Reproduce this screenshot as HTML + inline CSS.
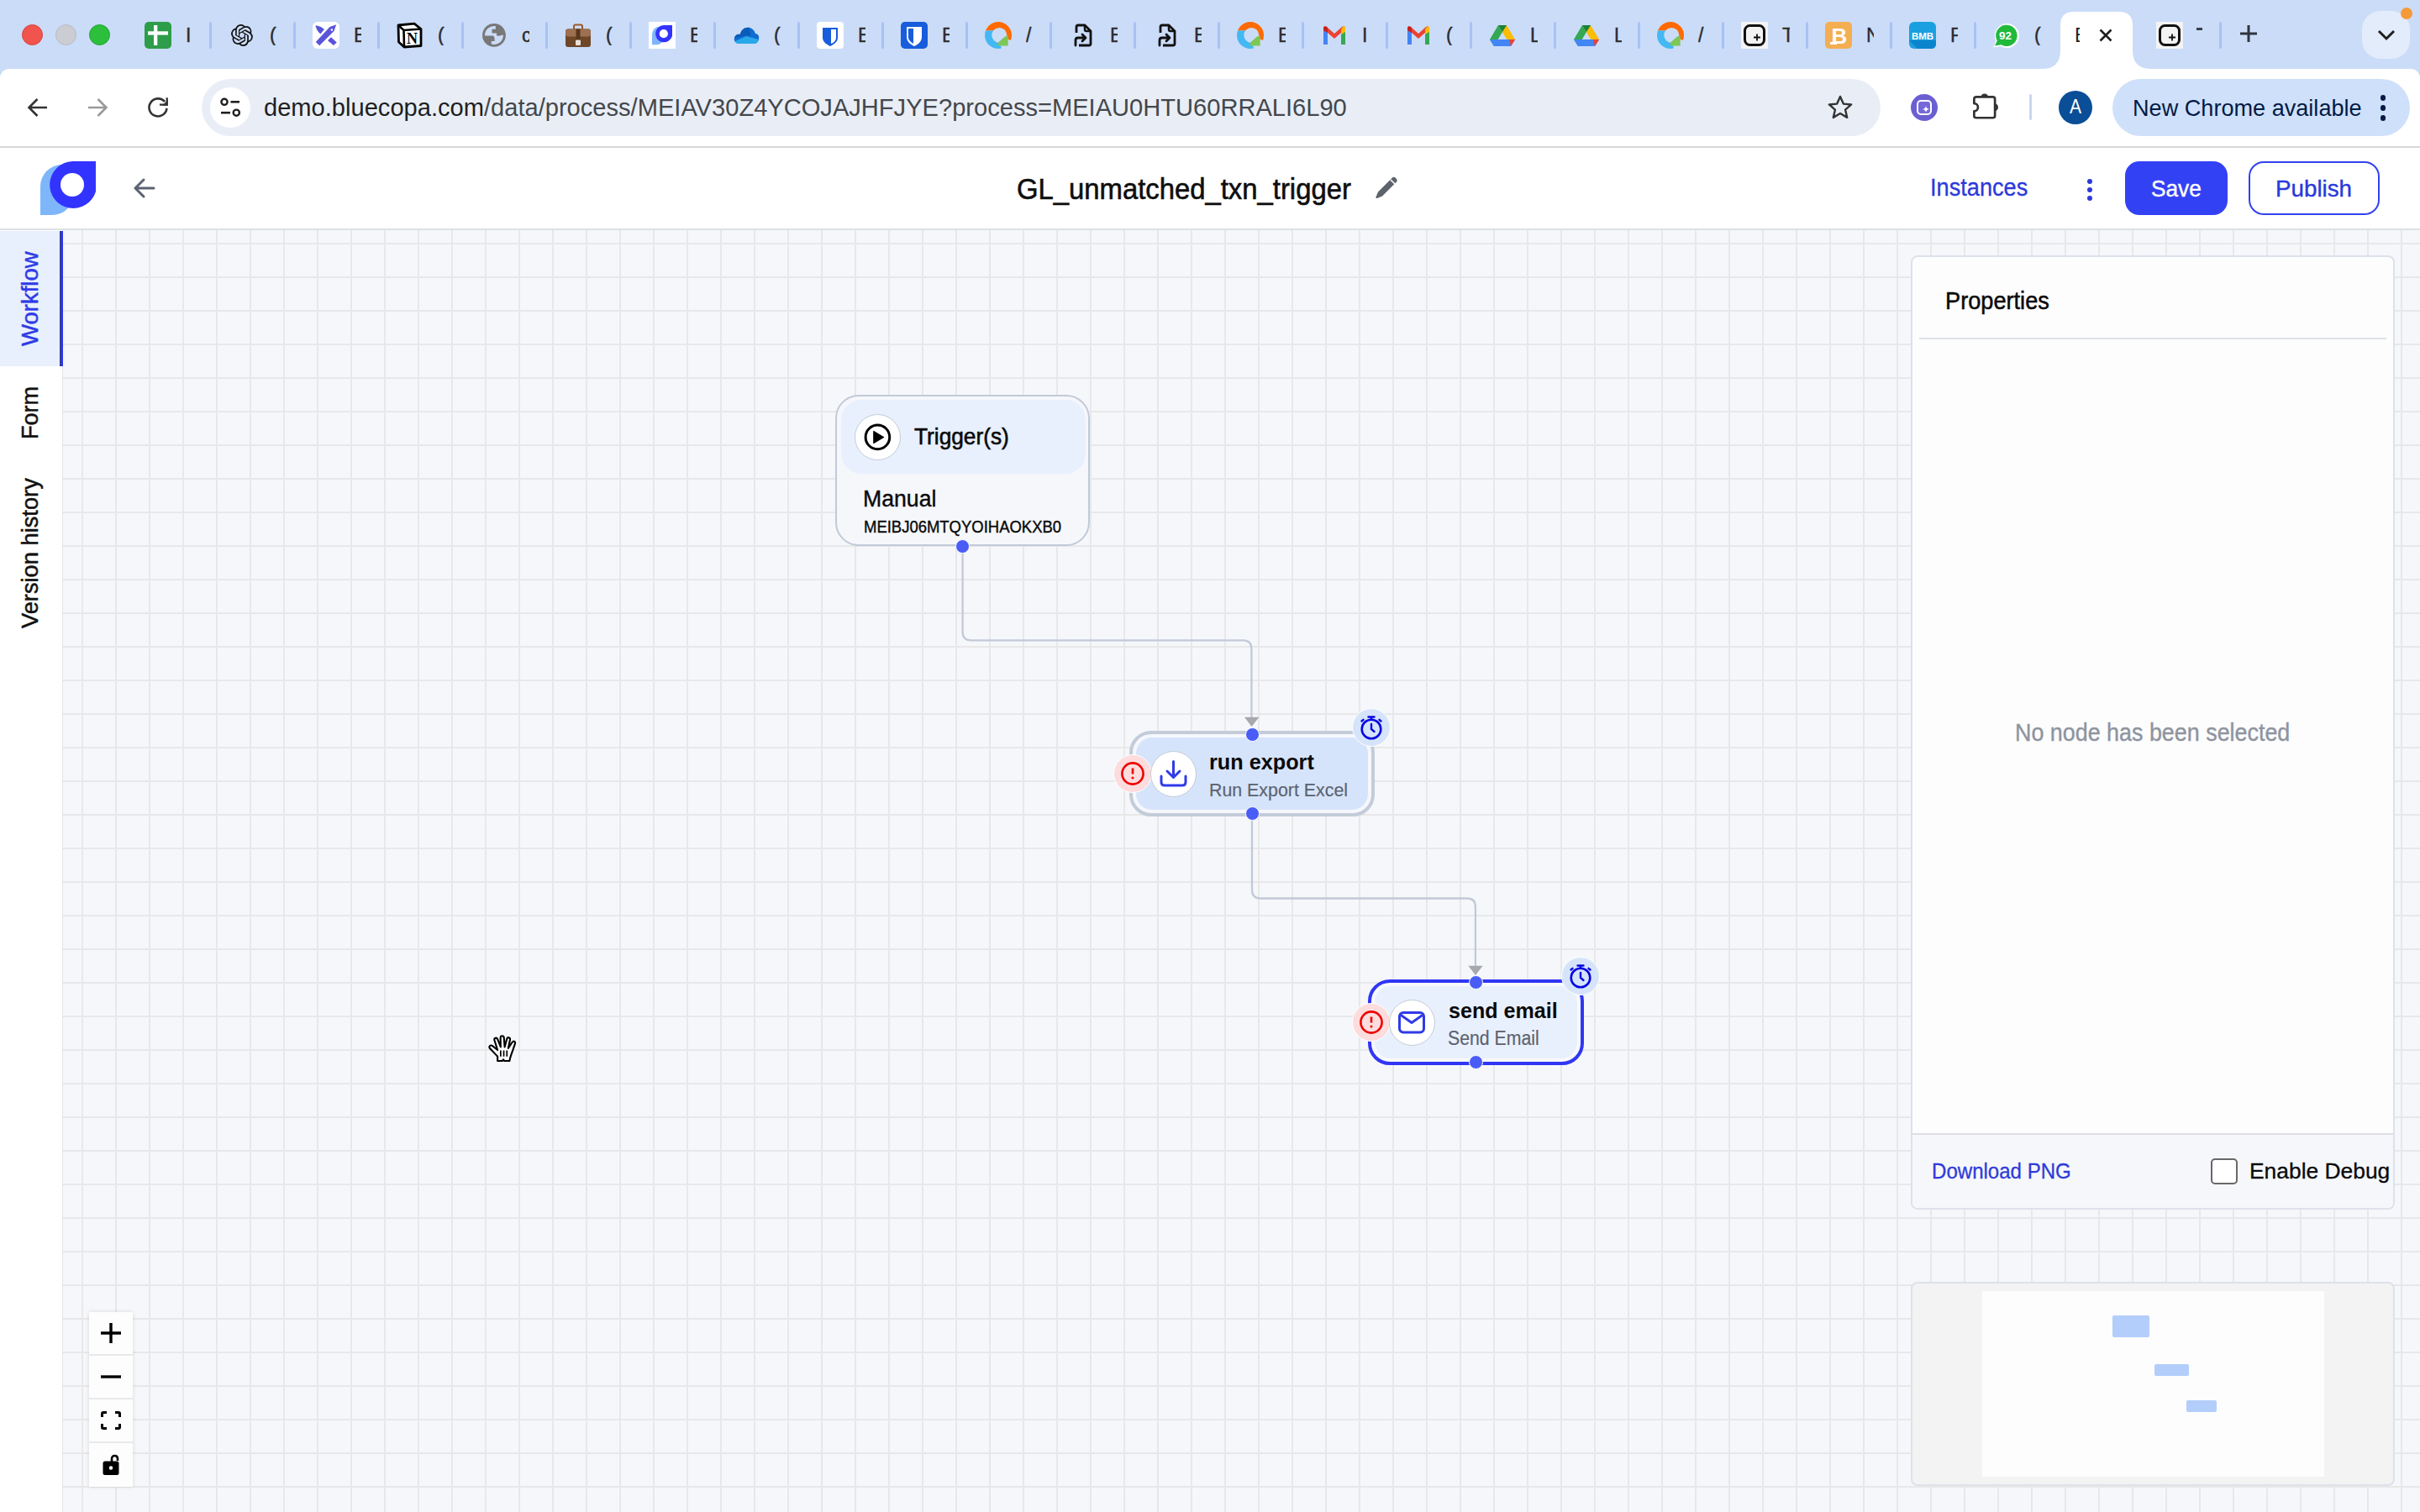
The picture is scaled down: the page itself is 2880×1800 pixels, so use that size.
<!DOCTYPE html>
<html><head><meta charset="utf-8"><title>Workflow</title>
<style>
*{box-sizing:border-box;margin:0;padding:0}
html,body{width:2880px;height:1800px;overflow:hidden;background:#F6F7FB;font-family:"Liberation Sans",sans-serif;position:relative}
.a{position:absolute}
.t{position:absolute;white-space:nowrap;transform-origin:0 50%;font-family:"Liberation Sans",sans-serif}
svg{position:absolute;overflow:visible}

</style></head><body>
<div class="a" style="left:0;top:0;width:2880px;height:100px;background:#CBDCF8"></div>
<div class="a" style="left:25.5px;top:28.5px;width:25px;height:25px;border-radius:50%;background:#F0544C;border:1px solid #D8443D"></div>
<div class="a" style="left:65.5px;top:28.5px;width:25px;height:25px;border-radius:50%;background:#CBCDD3;border:1px solid #B9BBC1"></div>
<div class="a" style="left:105.5px;top:28.5px;width:25px;height:25px;border-radius:50%;background:#2CBF3C;border:1px solid #22A530"></div>
<svg style="left:172px;top:26px" width="32" height="32" viewBox="0 0 32 32"><rect width="32" height="32" rx="5" fill="#2E9D49"/><rect x="11" y="4" width="4.3" height="24" fill="#fff"/><rect x="4" y="11.3" width="24" height="4.3" fill="#fff"/></svg>
<div class="a" style="left:221px;top:30px;width:9px;height:24px;overflow:hidden;font-size:23px;line-height:24px;color:#2C2C2C;-webkit-text-stroke:0.4px #2C2C2C;font-family:Liberation Sans">I</div>
<div class="a" style="left:248.5px;top:26px;width:3.5px;height:32px;background:#A6C2F5;border-radius:2px"></div>
<svg style="left:272px;top:26px" width="32" height="32" viewBox="0 0 32 32"><g transform="translate(3,3) scale(1.08)"><path fill="#111" d="M22.2819 9.8211a5.9847 5.9847 0 0 0-.5157-4.9108 6.0462 6.0462 0 0 0-6.5098-2.9A6.0651 6.0651 0 0 0 4.9807 4.1818a5.9847 5.9847 0 0 0-3.9977 2.9 6.0462 6.0462 0 0 0 .7427 7.0966 5.98 5.98 0 0 0 .511 4.9107 6.051 6.051 0 0 0 6.5146 2.9001A5.9847 5.9847 0 0 0 13.2599 24a6.0557 6.0557 0 0 0 5.7718-4.2058 5.9894 5.9894 0 0 0 3.9977-2.9001 6.0557 6.0557 0 0 0-.7475-7.0729zm-9.022 12.6081a4.4755 4.4755 0 0 1-2.8764-1.0408l.1419-.0804 4.7783-2.7582a.7948.7948 0 0 0 .3927-.6813v-6.7369l2.02 1.1686a.071.071 0 0 1 .038.052v5.5826a4.504 4.504 0 0 1-4.4945 4.4944zm-9.6607-4.1254a4.4708 4.4708 0 0 1-.5346-3.0137l.142.0852 4.783 2.7582a.7712.7712 0 0 0 .7806 0l5.8428-3.3685v2.3324a.0804.0804 0 0 1-.0332.0615L9.74 19.9502a4.4992 4.4992 0 0 1-6.1408-1.6464zM2.3408 7.8956a4.485 4.485 0 0 1 2.3655-1.9728V11.6a.7664.7664 0 0 0 .3879.6765l5.8144 3.3543-2.0201 1.1685a.0757.0757 0 0 1-.071 0l-4.8303-2.7865A4.504 4.504 0 0 1 2.3408 7.872zm16.5963 3.8558L13.1038 8.364 15.1192 7.2a.0757.0757 0 0 1 .071 0l4.8303 2.7913a4.4944 4.4944 0 0 1-.6765 8.1042v-5.6772a.79.79 0 0 0-.407-.667zm2.0107-3.0231l-.142-.0852-4.7735-2.7818a.7759.7759 0 0 0-.7854 0L9.409 9.2297V6.8974a.0662.0662 0 0 1 .0284-.0615l4.8303-2.7866a4.4992 4.4992 0 0 1 6.6802 4.66zM8.3065 12.863l-2.02-1.1638a.0804.0804 0 0 1-.038-.0567V6.0742a4.4992 4.4992 0 0 1 7.3757-3.4537l-.142.0805L8.704 5.459a.7948.7948 0 0 0-.3927.6813zm1.0976-2.3654l2.602-1.4998 2.6069 1.4998v2.9994l-2.5974 1.4997-2.6067-1.4997Z"/></g></svg>
<div class="a" style="left:321px;top:30px;width:9px;height:24px;overflow:hidden;font-size:23px;line-height:24px;color:#2C2C2C;-webkit-text-stroke:0.4px #2C2C2C;font-family:Liberation Sans">(</div>
<div class="a" style="left:348.5px;top:26px;width:3.5px;height:32px;background:#A6C2F5;border-radius:2px"></div>
<svg style="left:372px;top:26px" width="32" height="32" viewBox="0 0 32 32"><rect width="32" height="32" rx="6" fill="#fff"/><path d="M3.8 24 L8.2 28.2 L25.5 11 L28.2 3.2 L20.5 6 Z" fill="#5A54D8"/><path d="M3.4 4.2 Q11 5.5 13.9 9 L9.3 14.6 Q4.5 10 3.4 4.2 Z" fill="#5A54D8"/><path d="M18 22.2 L22 18.2 L28.8 24.4 L25 28 Z" fill="#5A54D8"/><circle cx="22.9" cy="9.5" r="1.3" fill="#fff"/></svg>
<div class="a" style="left:421px;top:30px;width:9px;height:24px;overflow:hidden;font-size:23px;line-height:24px;color:#2C2C2C;-webkit-text-stroke:0.4px #2C2C2C;font-family:Liberation Sans">E</div>
<div class="a" style="left:448.5px;top:26px;width:3.5px;height:32px;background:#A6C2F5;border-radius:2px"></div>
<svg style="left:472px;top:26px" width="32" height="32" viewBox="0 0 32 32"><path d="M2 4 L21 2.2 L29 8.5 L29 28.5 L9 30 L2.5 24 Z" fill="#fff" stroke="#000" stroke-width="2.8" stroke-linejoin="round"/><path d="M2.5 4.5 L8.5 10 L29 8.5 M8.5 10 L9 30" fill="none" stroke="#000" stroke-width="2.6"/><text x="18.5" y="25.5" text-anchor="middle" font-family="Liberation Serif" font-weight="700" font-size="18">N</text></svg>
<div class="a" style="left:521px;top:30px;width:9px;height:24px;overflow:hidden;font-size:23px;line-height:24px;color:#2C2C2C;-webkit-text-stroke:0.4px #2C2C2C;font-family:Liberation Sans">(</div>
<div class="a" style="left:548.5px;top:26px;width:3.5px;height:32px;background:#A6C2F5;border-radius:2px"></div>
<svg style="left:572px;top:26px" width="32" height="32" viewBox="0 0 32 32"><g transform="translate(-2,-2)"><circle cx="17.95" cy="17.9" r="13.9" fill="#787878"/><path d="M6.95 17.6 A11 11 0 0 1 19.8 7.06 V10.7 H15.5 V15.5 H20.95 V17.9 Q21.5 18.8 23.8 18.8 L28.94 17.6 A11 11 0 0 1 14.76 28.43 V25 H18.57 V21.4 Q18.2 18.6 16.7 18.6 H7 Z" fill="#CBDCF8"/></g></svg>
<div class="a" style="left:621px;top:30px;width:9px;height:24px;overflow:hidden;font-size:23px;line-height:24px;color:#2C2C2C;-webkit-text-stroke:0.4px #2C2C2C;font-family:Liberation Sans">c</div>
<div class="a" style="left:648.5px;top:26px;width:3.5px;height:32px;background:#A6C2F5;border-radius:2px"></div>
<svg style="left:672px;top:26px" width="32" height="32" viewBox="0 0 32 32"><rect x="11" y="3.5" width="10" height="6" rx="2" fill="none" stroke="#9A5A2A" stroke-width="2"/><rect x="1" y="8.5" width="30" height="21.5" rx="3" fill="#6E4729"/><rect x="1" y="8.5" width="30" height="9" rx="3" fill="#9C7050"/><rect x="13.5" y="8.5" width="5" height="16" fill="#5A361C"/><rect x="13" y="21.5" width="6" height="6.5" rx="1" fill="#E8E0D8"/></svg>
<div class="a" style="left:721px;top:30px;width:9px;height:24px;overflow:hidden;font-size:23px;line-height:24px;color:#2C2C2C;-webkit-text-stroke:0.4px #2C2C2C;font-family:Liberation Sans">(</div>
<div class="a" style="left:748.5px;top:26px;width:3.5px;height:32px;background:#A6C2F5;border-radius:2px"></div>
<svg style="left:772px;top:26px" width="32" height="32" viewBox="0 0 32 32"><rect width="32" height="32" fill="#fff"/><g transform="translate(4,4) scale(0.36363636363636365)"><path d="M0 64 V30 A26 26 0 0 1 26 4 H40 V38 A26 26 0 0 1 14 64 Z" fill="#7EB6FA"/><path d="M66 0 V36 A28 28 0 1 1 38 0 Z" fill="#3333FF"/><circle cx="38" cy="28" r="14" fill="#fff"/></g></svg>
<div class="a" style="left:821px;top:30px;width:9px;height:24px;overflow:hidden;font-size:23px;line-height:24px;color:#2C2C2C;-webkit-text-stroke:0.4px #2C2C2C;font-family:Liberation Sans">E</div>
<div class="a" style="left:848.5px;top:26px;width:3.5px;height:32px;background:#A6C2F5;border-radius:2px"></div>
<svg style="left:872px;top:26px" width="32" height="32" viewBox="0 0 32 32"><path d="M8 26 C3 26 1 22 2 19 C3 15 7 14 9 15 C10 9 15 6 20 7 C24 8 26 11 27 14 C30 14 32 17 31 21 C30 25 27 26 25 26 Z" fill="#0F6CD0"/><path d="M2 19 C3 15 7 14 9 15 C10 9 15 6 20 7 L21 16 Z" fill="#0A5CB8"/><path d="M3 23 L16 17 L31 21 C30 25 27 26 25 26 L8 26 C5 26 3 25 3 23Z" fill="#28A8EA"/></svg>
<div class="a" style="left:921px;top:30px;width:9px;height:24px;overflow:hidden;font-size:23px;line-height:24px;color:#2C2C2C;-webkit-text-stroke:0.4px #2C2C2C;font-family:Liberation Sans">(</div>
<div class="a" style="left:948.5px;top:26px;width:3.5px;height:32px;background:#A6C2F5;border-radius:2px"></div>
<svg style="left:972px;top:26px" width="32" height="32" viewBox="0 0 32 32"><rect width="32" height="32" rx="4" fill="#fff"/><path d="M7 7 H25 V19 C25 24 20 27 16 29 C12 27 7 24 7 19 Z" fill="#175DDC"/><path d="M17 9 H23 V19 C23 22 20 25 17 26 Z" fill="#fff"/></svg>
<div class="a" style="left:1021px;top:30px;width:9px;height:24px;overflow:hidden;font-size:23px;line-height:24px;color:#2C2C2C;-webkit-text-stroke:0.4px #2C2C2C;font-family:Liberation Sans">E</div>
<div class="a" style="left:1048.5px;top:26px;width:3.5px;height:32px;background:#A6C2F5;border-radius:2px"></div>
<svg style="left:1072px;top:26px" width="32" height="32" viewBox="0 0 32 32"><rect width="32" height="32" rx="5" fill="#175DDC"/><path d="M7 6 H25 V18 C25 24 20 27 16 29 C12 27 7 24 7 18 Z" fill="#fff"/><path d="M9 8 H15 V26 C12 24 9 22 9 18 Z" fill="#175DDC"/><path d="M17 8 H23 V18 C23 22 20 25 17 26 Z" fill="#fff"/></svg>
<div class="a" style="left:1121px;top:30px;width:9px;height:24px;overflow:hidden;font-size:23px;line-height:24px;color:#2C2C2C;-webkit-text-stroke:0.4px #2C2C2C;font-family:Liberation Sans">E</div>
<div class="a" style="left:1148.5px;top:26px;width:3.5px;height:32px;background:#A6C2F5;border-radius:2px"></div>
<svg style="left:1172px;top:26px" width="32" height="32" viewBox="0 0 32 32"><defs><clipPath id="co10"><path d="M-14 10.4 L16 10.4 L16 16 L43.8 27.2 L46 -14 L-14 -14 Z"/></clipPath><clipPath id="cb10"><path d="M-14 10.4 L16 10.4 L16 16 L23.26 45.1 L-14 46 Z"/></clipPath></defs><path d="M0 16 A16 16 0 1 0 32 16 A16 16 0 1 0 0 16 Z M8.3 15.9 A9 9 0 1 0 26.3 15.9 A9 9 0 1 0 8.3 15.9 Z" fill-rule="evenodd" fill="#FF6A00" clip-path="url(#co10)"/><path d="M0 16 A16 16 0 1 0 32 16 A16 16 0 1 0 0 16 Z M8.3 15.9 A9 9 0 1 0 26.3 15.9 A9 9 0 1 0 8.3 15.9 Z" fill-rule="evenodd" fill="#44B8F3" clip-path="url(#cb10)"/><path d="M16.1 24.6 L24 17.5 L27.7 16.6 L27.7 28.5 L16.1 28.5 Z" fill="#7DC757"/></svg>
<div class="a" style="left:1221px;top:30px;width:9px;height:24px;overflow:hidden;font-size:23px;line-height:24px;color:#2C2C2C;-webkit-text-stroke:0.4px #2C2C2C;font-family:Liberation Sans">/</div>
<div class="a" style="left:1248.5px;top:26px;width:3.5px;height:32px;background:#A6C2F5;border-radius:2px"></div>
<svg style="left:1272px;top:26px" width="32" height="32" viewBox="0 0 32 32"><path d="M9 13 V6 Q9 4 11 4 H19 L26 11 V26 Q26 28 24 28 H12" fill="none" stroke="#111" stroke-width="2.8" stroke-linejoin="round"/><path d="M19 4 V9 Q19 11 21 11 H26" fill="none" stroke="#111" stroke-width="2.5"/><path d="M8 28 V22 Q8 19 11 19 H20 M16 15 L20 19 L16 23" fill="none" stroke="#111" stroke-width="2.8" stroke-linecap="round" stroke-linejoin="round"/></svg>
<div class="a" style="left:1321px;top:30px;width:9px;height:24px;overflow:hidden;font-size:23px;line-height:24px;color:#2C2C2C;-webkit-text-stroke:0.4px #2C2C2C;font-family:Liberation Sans">E</div>
<div class="a" style="left:1348.5px;top:26px;width:3.5px;height:32px;background:#A6C2F5;border-radius:2px"></div>
<svg style="left:1372px;top:26px" width="32" height="32" viewBox="0 0 32 32"><path d="M9 13 V6 Q9 4 11 4 H19 L26 11 V26 Q26 28 24 28 H12" fill="none" stroke="#111" stroke-width="2.8" stroke-linejoin="round"/><path d="M19 4 V9 Q19 11 21 11 H26" fill="none" stroke="#111" stroke-width="2.5"/><path d="M8 28 V22 Q8 19 11 19 H20 M16 15 L20 19 L16 23" fill="none" stroke="#111" stroke-width="2.8" stroke-linecap="round" stroke-linejoin="round"/></svg>
<div class="a" style="left:1421px;top:30px;width:9px;height:24px;overflow:hidden;font-size:23px;line-height:24px;color:#2C2C2C;-webkit-text-stroke:0.4px #2C2C2C;font-family:Liberation Sans">E</div>
<div class="a" style="left:1448.5px;top:26px;width:3.5px;height:32px;background:#A6C2F5;border-radius:2px"></div>
<svg style="left:1472px;top:26px" width="32" height="32" viewBox="0 0 32 32"><defs><clipPath id="co13"><path d="M-14 10.4 L16 10.4 L16 16 L43.8 27.2 L46 -14 L-14 -14 Z"/></clipPath><clipPath id="cb13"><path d="M-14 10.4 L16 10.4 L16 16 L23.26 45.1 L-14 46 Z"/></clipPath></defs><path d="M0 16 A16 16 0 1 0 32 16 A16 16 0 1 0 0 16 Z M8.3 15.9 A9 9 0 1 0 26.3 15.9 A9 9 0 1 0 8.3 15.9 Z" fill-rule="evenodd" fill="#FF6A00" clip-path="url(#co13)"/><path d="M0 16 A16 16 0 1 0 32 16 A16 16 0 1 0 0 16 Z M8.3 15.9 A9 9 0 1 0 26.3 15.9 A9 9 0 1 0 8.3 15.9 Z" fill-rule="evenodd" fill="#44B8F3" clip-path="url(#cb13)"/><path d="M16.1 24.6 L24 17.5 L27.7 16.6 L27.7 28.5 L16.1 28.5 Z" fill="#7DC757"/></svg>
<div class="a" style="left:1521px;top:30px;width:9px;height:24px;overflow:hidden;font-size:23px;line-height:24px;color:#2C2C2C;-webkit-text-stroke:0.4px #2C2C2C;font-family:Liberation Sans">E</div>
<div class="a" style="left:1548.5px;top:26px;width:3.5px;height:32px;background:#A6C2F5;border-radius:2px"></div>
<svg style="left:1572px;top:26px" width="32" height="32" viewBox="0 0 32 32"><path d="M3 27 V8 Q3 4 7 6 L16 14 L25 6 Q29 4 29 8 V27 H24 V13 L16 20 L8 13 V27 Z" fill="#EA4335"/><rect x="3" y="11" width="5" height="16" rx="1.5" fill="#4285F4"/><rect x="24" y="11" width="5" height="16" rx="1.5" fill="#34A853"/><path d="M24 9 L27 5 Q29 5 29 8 V12 L24 15 Z" fill="#FBBC04"/><path d="M3 8 Q3 4 7 6 L8 7 V13 L3 10 Z" fill="#C5221F"/></svg>
<div class="a" style="left:1621px;top:30px;width:9px;height:24px;overflow:hidden;font-size:23px;line-height:24px;color:#2C2C2C;-webkit-text-stroke:0.4px #2C2C2C;font-family:Liberation Sans">I</div>
<div class="a" style="left:1648.5px;top:26px;width:3.5px;height:32px;background:#A6C2F5;border-radius:2px"></div>
<svg style="left:1672px;top:26px" width="32" height="32" viewBox="0 0 32 32"><path d="M3 27 V8 Q3 4 7 6 L16 14 L25 6 Q29 4 29 8 V27 H24 V13 L16 20 L8 13 V27 Z" fill="#EA4335"/><rect x="3" y="11" width="5" height="16" rx="1.5" fill="#4285F4"/><rect x="24" y="11" width="5" height="16" rx="1.5" fill="#34A853"/><path d="M24 9 L27 5 Q29 5 29 8 V12 L24 15 Z" fill="#FBBC04"/><path d="M3 8 Q3 4 7 6 L8 7 V13 L3 10 Z" fill="#C5221F"/></svg>
<div class="a" style="left:1721px;top:30px;width:9px;height:24px;overflow:hidden;font-size:23px;line-height:24px;color:#2C2C2C;-webkit-text-stroke:0.4px #2C2C2C;font-family:Liberation Sans">(</div>
<div class="a" style="left:1748.5px;top:26px;width:3.5px;height:32px;background:#A6C2F5;border-radius:2px"></div>
<svg style="left:1772px;top:26px" width="32" height="32" viewBox="0 0 32 32"><path d="M11 4 H21 L31 21 L26 29 Z" fill="#FBBC04"/><path d="M11 4 L1 21 L6 29 L16 12 Z" fill="#34A853"/><path d="M6 29 L1 21 H31 L26 29 Z" fill="#4285F4"/><path d="M26 29 L31 21 H24 Z" fill="#EA4335"/><path d="M11 4 L16 12 L21 4 Z" fill="#188038"/></svg>
<div class="a" style="left:1821px;top:30px;width:9px;height:24px;overflow:hidden;font-size:23px;line-height:24px;color:#2C2C2C;-webkit-text-stroke:0.4px #2C2C2C;font-family:Liberation Sans">L</div>
<div class="a" style="left:1848.5px;top:26px;width:3.5px;height:32px;background:#A6C2F5;border-radius:2px"></div>
<svg style="left:1872px;top:26px" width="32" height="32" viewBox="0 0 32 32"><path d="M11 4 H21 L31 21 L26 29 Z" fill="#FBBC04"/><path d="M11 4 L1 21 L6 29 L16 12 Z" fill="#34A853"/><path d="M6 29 L1 21 H31 L26 29 Z" fill="#4285F4"/><path d="M26 29 L31 21 H24 Z" fill="#EA4335"/><path d="M11 4 L16 12 L21 4 Z" fill="#188038"/></svg>
<div class="a" style="left:1921px;top:30px;width:9px;height:24px;overflow:hidden;font-size:23px;line-height:24px;color:#2C2C2C;-webkit-text-stroke:0.4px #2C2C2C;font-family:Liberation Sans">L</div>
<div class="a" style="left:1948.5px;top:26px;width:3.5px;height:32px;background:#A6C2F5;border-radius:2px"></div>
<svg style="left:1972px;top:26px" width="32" height="32" viewBox="0 0 32 32"><defs><clipPath id="co18"><path d="M-14 10.4 L16 10.4 L16 16 L43.8 27.2 L46 -14 L-14 -14 Z"/></clipPath><clipPath id="cb18"><path d="M-14 10.4 L16 10.4 L16 16 L23.26 45.1 L-14 46 Z"/></clipPath></defs><path d="M0 16 A16 16 0 1 0 32 16 A16 16 0 1 0 0 16 Z M8.3 15.9 A9 9 0 1 0 26.3 15.9 A9 9 0 1 0 8.3 15.9 Z" fill-rule="evenodd" fill="#FF6A00" clip-path="url(#co18)"/><path d="M0 16 A16 16 0 1 0 32 16 A16 16 0 1 0 0 16 Z M8.3 15.9 A9 9 0 1 0 26.3 15.9 A9 9 0 1 0 8.3 15.9 Z" fill-rule="evenodd" fill="#44B8F3" clip-path="url(#cb18)"/><path d="M16.1 24.6 L24 17.5 L27.7 16.6 L27.7 28.5 L16.1 28.5 Z" fill="#7DC757"/></svg>
<div class="a" style="left:2021px;top:30px;width:9px;height:24px;overflow:hidden;font-size:23px;line-height:24px;color:#2C2C2C;-webkit-text-stroke:0.4px #2C2C2C;font-family:Liberation Sans">/</div>
<div class="a" style="left:2048.5px;top:26px;width:3.5px;height:32px;background:#A6C2F5;border-radius:2px"></div>
<svg style="left:2072px;top:26px" width="32" height="32" viewBox="0 0 32 32"><rect width="32" height="32" fill="#F3F3F3"/><rect x="4.5" y="4.5" width="23" height="23" rx="6" fill="none" stroke="#111" stroke-width="3"/><path d="M19 14.5 V22.5 M15 18.5 H23" stroke="#111" stroke-width="1.8"/></svg>
<div class="a" style="left:2121px;top:30px;width:9px;height:24px;overflow:hidden;font-size:23px;line-height:24px;color:#2C2C2C;-webkit-text-stroke:0.4px #2C2C2C;font-family:Liberation Sans">T</div>
<div class="a" style="left:2148.5px;top:26px;width:3.5px;height:32px;background:#A6C2F5;border-radius:2px"></div>
<svg style="left:2172px;top:26px" width="32" height="32" viewBox="0 0 32 32"><rect width="32" height="32" rx="5" fill="#F4AE52"/><text x="17" y="26" text-anchor="middle" font-family="Liberation Sans" font-weight="700" font-size="26" fill="#fff">B</text><rect x="6" y="24" width="8" height="3" fill="#fff"/></svg>
<div class="a" style="left:2221px;top:30px;width:9px;height:24px;overflow:hidden;font-size:23px;line-height:24px;color:#2C2C2C;-webkit-text-stroke:0.4px #2C2C2C;font-family:Liberation Sans">N</div>
<div class="a" style="left:2248.5px;top:26px;width:3.5px;height:32px;background:#A6C2F5;border-radius:2px"></div>
<svg style="left:2272px;top:26px" width="32" height="32" viewBox="0 0 32 32"><rect width="32" height="32" rx="6" fill="#1AA0E0"/><path d="M0 22 L10 32 H26 Q32 32 32 26 V22 Z" fill="#0A84CC"/><text x="16" y="21" text-anchor="middle" font-family="Liberation Sans" font-weight="700" font-size="11.5" fill="#fff">BMB</text></svg>
<div class="a" style="left:2321px;top:30px;width:9px;height:24px;overflow:hidden;font-size:23px;line-height:24px;color:#2C2C2C;-webkit-text-stroke:0.4px #2C2C2C;font-family:Liberation Sans">F</div>
<div class="a" style="left:2348.5px;top:26px;width:3.5px;height:32px;background:#A6C2F5;border-radius:2px"></div>
<svg style="left:2372px;top:26px" width="32" height="32" viewBox="0 0 32 32"><g transform="translate(-3,0)"><path d="M3 30.5 L6.5 23 A14.5 14.5 0 1 1 12 29 Z" fill="#fff"/><path d="M5 28.5 L7.8 22.5 A12.7 12.7 0 1 1 12.5 27.3 Z" fill="#20B93A"/><text x="17.5" y="21" text-anchor="middle" font-family="Liberation Sans" font-weight="700" font-size="13.5" fill="#fff">92</text></g></svg>
<div class="a" style="left:2421px;top:30px;width:9px;height:24px;overflow:hidden;font-size:23px;line-height:24px;color:#2C2C2C;-webkit-text-stroke:0.4px #2C2C2C;font-family:Liberation Sans">(</div>
<svg style="left:2420px;top:0" width="150" height="84" viewBox="0 0 150 84"><path d="M10 82 Q32 82 32 60 V30 Q32 14 48 14 H102 Q118 14 118 30 V60 Q118 82 140 82 Z" fill="#fff"/></svg>
<div class="a" style="left:2469px;top:30px;width:6px;height:24px;overflow:hidden;font-size:23px;line-height:24px;color:#1F1F1F">E</div>
<svg style="left:2498px;top:34px" width="16" height="16" viewBox="0 0 16 16"><path d="M1.5 1.5 L14.5 14.5 M14.5 1.5 L1.5 14.5" stroke="#1F1F1F" stroke-width="2.6"/></svg>
<svg style="left:2566px;top:26px" width="32" height="32" viewBox="0 0 32 32"><rect width="32" height="32" fill="#F3F3F3"/><rect x="4.5" y="4.5" width="23" height="23" rx="6" fill="none" stroke="#111" stroke-width="3"/><path d="M19 14.5 V22.5 M15 18.5 H23" stroke="#111" stroke-width="1.8"/></svg>
<div class="a" style="left:2614px;top:33px;width:7px;height:3px;background:#3A3F48"></div>
<div class="a" style="left:2640.5px;top:26px;width:3.5px;height:32px;background:#A6C2F5;border-radius:2px"></div>
<svg style="left:2666px;top:30px" width="20" height="20" viewBox="0 0 20 20"><path d="M10 0 V20 M0 10 H20" stroke="#2F343C" stroke-width="3"/></svg>
<div class="a" style="left:2811px;top:13px;width:57px;height:57px;border-radius:22px;background:#E3ECFB"></div>
<svg style="left:2829px;top:35px" width="22" height="14" viewBox="0 0 22 14"><path d="M2 2 L11 11 L20 2" fill="none" stroke="#1F1F1F" stroke-width="3"/></svg>
<div class="a" style="left:2857px;top:8.5px;width:14px;height:14px;border-radius:50%;background:#F59A3A"></div>
<div class="a" style="left:0;top:82px;width:2880px;height:94px;background:#FFFFFF;border-top-left-radius:11px;border-top-right-radius:11px"></div>
<div class="a" style="left:0;top:174px;width:2880px;height:2px;background:#D6D8D6"></div>
<svg style="left:32px;top:116px" width="25" height="24" viewBox="0 0 25 24"><path d="M24 12 H3 M12.5 2 L2.5 12 L12.5 22" fill="none" stroke="#333" stroke-width="2.6"/></svg>
<svg style="left:103.5px;top:116px" width="25" height="24" viewBox="0 0 25 24"><path d="M1 12 H22 M12.5 2 L22.5 12 L12.5 22" fill="none" stroke="#9A9A9A" stroke-width="2.6"/></svg>
<svg style="left:175px;top:115px" width="26" height="26" viewBox="0 0 26 26"><path d="M21.04 6.15 A10.5 10.5 0 1 0 23.46 13.82" fill="none" stroke="#333" stroke-width="2.6"/><path d="M15 9.6 H23.7 V1.2" fill="none" stroke="#333" stroke-width="2.3"/><path d="M18 10.7 H24.8 V4 Z" fill="#333"/></svg>
<div class="a" style="left:240px;top:94px;width:1998px;height:68px;border-radius:34px;background:#E9EEF6"></div>
<div class="a" style="left:250px;top:104px;width:48px;height:48px;border-radius:50%;background:#FFFFFF"></div>
<svg style="left:260px;top:114px" width="28" height="28" viewBox="0 0 28 28"><circle cx="7" cy="7.3" r="3.6" fill="none" stroke="#1F1F1F" stroke-width="2.4"/><path d="M14.5 7.3 H25" stroke="#1F1F1F" stroke-width="2.6"/><path d="M3 20.2 H14" stroke="#1F1F1F" stroke-width="2.6"/><circle cx="21.3" cy="20.2" r="3.6" fill="none" stroke="#1F1F1F" stroke-width="2.4"/></svg>
<div class="t" style="left:314.24px;top:112.80px;font-size:30px;line-height:30px;color:#1F1F1F;font-weight:400;transform:scaleX(0.9696);-webkit-text-stroke:0px #1F1F1F;">demo.bluecopa.com<span style="color:#44474C">/data/process/MEIAV30Z4YCOJAJHFJYE?process=MEIAU0HTU60RRALI6L90</span></div>
<svg style="left:2173px;top:111px" width="34" height="34" viewBox="0 0 24 24"><path d="M12 2.8 L14.7 8.9 L21.3 9.5 L16.3 13.9 L17.8 20.4 L12 17 L6.2 20.4 L7.7 13.9 L2.7 9.5 L9.3 8.9 Z" fill="none" stroke="#333" stroke-width="1.7" stroke-linejoin="round"/></svg>
<div class="a" style="left:2274px;top:112px;width:32px;height:32px;border-radius:50%;background:#6A5FD2"></div>
<div class="a" style="left:2281px;top:119px;width:18.2px;height:18px;border-radius:5px;border:2.2px solid #fff;background:#7468DA"></div>
<svg style="left:2288px;top:126px" width="8" height="8" viewBox="0 0 8 8"><path d="M4 0 Q4.5 3.5 8 4 Q4.5 4.5 4 8 Q3.5 4.5 0 4 Q3.5 3.5 4 0Z" fill="#fff"/></svg>
<svg style="left:2344px;top:108px" width="40" height="40" viewBox="0 0 40 40"><path d="M5.35 10 Q5.35 7.35 8 7.35 H27.5 Q30.15 7.35 30.15 10 V30 Q30.15 32.25 27.5 32.25 H8 Q5.35 32.25 5.35 30 V24.4 A4.5 4.5 0 0 0 5.35 15.2 Z" fill="none" stroke="#333" stroke-width="2.7" stroke-linejoin="round"/><path d="M13.3 8 A4.5 4.5 0 0 1 22.3 8 Z" fill="#333"/><path d="M29.5 15.2 A4.5 4.5 0 0 1 29.5 24.2 Z" fill="#333"/></svg>
<div class="a" style="left:2414.5px;top:112px;width:3px;height:31px;background:#C9D7F0;border-radius:2px"></div>
<div class="a" style="left:2450px;top:108px;width:40px;height:40px;border-radius:50%;background:#0A4E98"></div>
<div class="t" style="left:2463.00px;top:115.95px;font-size:23.7px;line-height:23.7px;color:#FFFFFF;font-weight:400;transform:scaleX(0.8883);-webkit-text-stroke:0px #FFFFFF;">A</div>
<div class="a" style="left:2514px;top:94px;width:354px;height:68px;border-radius:34px;background:#CFE0FB"></div>
<div class="t" style="left:2537.53px;top:114.64px;font-size:27.6px;line-height:27.6px;color:#041B45;font-weight:400;transform:scaleX(0.9821);-webkit-text-stroke:0px #041B45;">New Chrome available</div>
<div class="a" style="left:2832.8px;top:113.3px;width:6.4px;height:6.4px;border-radius:50%;background:#041B45"></div>
<div class="a" style="left:2832.8px;top:125.3px;width:6.4px;height:6.4px;border-radius:50%;background:#041B45"></div>
<div class="a" style="left:2832.8px;top:137.3px;width:6.4px;height:6.4px;border-radius:50%;background:#041B45"></div>
<div class="a" style="left:0;top:176px;width:2880px;height:96px;background:#FFFFFF"></div>
<div class="a" style="left:0;top:272px;width:2880px;height:2px;background:#DDE0E5"></div>
<svg style="left:48px;top:192px" width="66" height="64" viewBox="0 0 66 64"><g transform="translate(0,0) scale(1.0)"><path d="M0 64 V30 A26 26 0 0 1 26 4 H40 V38 A26 26 0 0 1 14 64 Z" fill="#7EB6FA"/><path d="M66 0 V36 A28 28 0 1 1 38 0 Z" fill="#3333FF"/><circle cx="38" cy="28" r="14" fill="#fff"/></g></svg>
<svg style="left:158px;top:211px" width="28" height="26" viewBox="0 0 28 26"><path d="M25 13 H4 M13 3 L3 13 L13 23" fill="none" stroke="#5B6270" stroke-width="3" stroke-linecap="round" stroke-linejoin="round"/></svg>
<div class="t" style="left:1210.36px;top:207.25px;font-size:35px;line-height:35px;color:#0E0E0E;font-weight:400;transform:scaleX(0.9380);-webkit-text-stroke:0.6px #0E0E0E;">GL_unmatched_txn_trigger</div>
<svg style="left:1636px;top:209px" width="28" height="29" viewBox="0 0 28 29"><path d="M21 2.5 Q23 1 25 3 L26 4 Q27.5 6 26 7.5 L9 24.5 L3 27 Q1 27.5 1.5 25.5 L4 19.5 Z" fill="#5D636D"/><path d="M19 5 L24 10" stroke="#fff" stroke-width="1.6"/></svg>
<div class="t" style="left:2297.35px;top:209.35px;font-size:29px;line-height:29px;color:#2B39DB;font-weight:400;transform:scaleX(0.9370);-webkit-text-stroke:0.3px #2B39DB;">Instances</div>
<div class="a" style="left:2483.7px;top:212.7px;width:6.6px;height:6.6px;border-radius:50%;background:#2B39DB"></div>
<div class="a" style="left:2483.7px;top:222.7px;width:6.6px;height:6.6px;border-radius:50%;background:#2B39DB"></div>
<div class="a" style="left:2483.7px;top:232.7px;width:6.6px;height:6.6px;border-radius:50%;background:#2B39DB"></div>
<div class="a" style="left:2529px;top:192px;width:122px;height:64px;border-radius:17px;background:#3341F5"></div>
<div class="t" style="left:2559.82px;top:209.78px;font-size:28.5px;line-height:28.5px;color:#FFFFFF;font-weight:400;transform:scaleX(0.9213);-webkit-text-stroke:0.4px #FFFFFF;">Save</div>
<div class="a" style="left:2675.5px;top:192px;width:156.5px;height:64px;border-radius:18px;border:2px solid #3341F0;background:#FFFFFF"></div>
<div class="t" style="left:2707.78px;top:209.78px;font-size:28.5px;line-height:28.5px;color:#2B39DB;font-weight:400;transform:scaleX(0.9737);-webkit-text-stroke:0.4px #2B39DB;">Publish</div>
<div class="a" style="left:0;top:274px;width:2880px;height:1526px;background-color:#F6F7FB;background-image:linear-gradient(to right,#E8E8E9 2px,transparent 2px),linear-gradient(to bottom,#E8E8E9 2px,transparent 2px);background-size:40px 40px;background-position:17px 15px"></div>
<div class="a" style="left:0;top:274px;width:75px;height:1526px;background:#FFFFFF;border-right:1.5px solid #E2E4E9"></div>
<div class="a" style="left:0;top:275px;width:71px;height:161px;background:#E8EFFD"></div>
<div class="a" style="left:71px;top:275px;width:4px;height:161px;background:#2B36F0;border-left:1px solid #3B4258"></div>
<div class="t" style="left:21.62px;top:411.64px;font-size:27.5px;line-height:27.5px;color:#2E3BE6;font-weight:400;transform-origin:0 0;transform:rotate(-90deg) scaleX(1.0002);-webkit-text-stroke:0.5px #2E3BE6">Workflow</div>
<div class="t" style="left:21.62px;top:523.17px;font-size:27.5px;line-height:27.5px;color:#111111;font-weight:400;transform-origin:0 0;transform:rotate(-90deg) scaleX(0.9846);-webkit-text-stroke:0.5px #111111">Form</div>
<div class="t" style="left:21.62px;top:747.84px;font-size:27.5px;line-height:27.5px;color:#111111;font-weight:400;transform-origin:0 0;transform:rotate(-90deg) scaleX(0.9913);-webkit-text-stroke:0.5px #111111">Version history</div>
<svg style="left:0;top:0" width="2880" height="1800"><path d="M1145.6 655 V752.3 Q1145.6 762.3 1155.6 762.3 H1479.4 Q1489.4 762.3 1489.4 772.3 V856" fill="none" stroke="#C1CAD6" stroke-width="2.3"/><path d="M1481 853.8 H1498.3 L1489.6 865 Z" fill="#A6A8AE"/><path d="M1490 970 V1059.5 Q1490 1069.5 1500 1069.5 H1745.9 Q1755.9 1069.5 1755.9 1079.5 V1151" fill="none" stroke="#C1CAD6" stroke-width="2.3"/><path d="M1747.4 1149.7 H1764.6 L1756 1161 Z" fill="#A6A8AE"/></svg>
<div class="a" style="left:994px;top:470px;width:303px;height:179.5px;border-radius:28px;border:2px solid #C0CAD8;background:#F6F7FB"></div>
<div class="a" style="left:1000.5px;top:476px;width:291.5px;height:88px;border-radius:24px;background:#E8F0FD"></div>
<div class="a" style="left:1016.5px;top:492.5px;width:55px;height:55px;border-radius:50%;background:#FFFFFF;border:1.8px solid #C3CBD6"></div>
<svg style="left:1027px;top:503px" width="34" height="34" viewBox="0 0 34 34"><circle cx="17.4" cy="17.4" r="14.3" fill="none" stroke="#000" stroke-width="3"/><path d="M12.8 10.5 V24.5 L24.5 17.5 Z" fill="#000" stroke="#000" stroke-width="1.2" stroke-linejoin="round"/></svg>
<div class="t" style="left:1088.47px;top:506.20px;font-size:28px;line-height:28px;color:#0A0A0A;font-weight:400;transform:scaleX(0.9380);-webkit-text-stroke:0.6px #0A0A0A;">Trigger(s)</div>
<div class="t" style="left:1027.37px;top:580.55px;font-size:27px;line-height:27px;color:#0A0A0A;font-weight:400;transform:scaleX(0.9865);-webkit-text-stroke:0.4px #0A0A0A;">Manual</div>
<div class="t" style="left:1028.02px;top:617.00px;font-size:20px;line-height:20px;color:#0A0A0A;font-weight:400;transform:scaleX(0.9235);-webkit-text-stroke:0.4px #0A0A0A;">MEIBJ06MTQYOIHAOKXB0</div>
<div class="a" style="left:1137.1px;top:641.5px;width:17px;height:17px;border-radius:50%;background:#4A5CF6;border:1.5px solid #FFFFFF"></div>
<div class="a" style="left:1344px;top:870px;width:291.5px;height:101.5px;border-radius:26px;border:4px solid #C3CCD8;background:#F5F7FC"></div>
<div class="a" style="left:1352px;top:878px;width:276px;height:86px;border-radius:19px;background:#D6E4FB"></div>
<div class="a" style="left:1325px;top:898px;width:46px;height:46px;border-radius:50%;background:#FDDCDD;border:1.8px solid #FFFFFF"></div><svg style="left:1332px;top:905px" width="32" height="32" viewBox="0 0 32 32"><circle cx="16" cy="16" r="12.6" fill="none" stroke="#EE0000" stroke-width="2.6"/><path d="M16 9.5 V16.5" stroke="#EE0000" stroke-width="2.6"/><circle cx="16" cy="21" r="1.5" fill="#EE0000"/></svg>
<div class="a" style="left:1369.0px;top:893.5px;width:55px;height:55px;border-radius:50%;background:#FFFFFF;border:1.8px solid #C3CBD6"></div>
<svg style="left:1380px;top:904px" width="33" height="34" viewBox="0 0 33 34"><path d="M16.5 2.5 V21 M9 14 L16.5 21.5 L24 14" fill="none" stroke="#2F3BE8" stroke-width="3" stroke-linecap="round" stroke-linejoin="round"/><path d="M2 20 V27 Q2 31 6 31 H27 Q31 31 31 27 V20" fill="none" stroke="#2F3BE8" stroke-width="3" stroke-linecap="round"/></svg>
<div class="t" style="left:1439.36px;top:894.20px;font-size:26px;line-height:26px;color:#0A0A0A;font-weight:700;transform:scaleX(0.9708);-webkit-text-stroke:0px #0A0A0A;">run export</div>
<div class="t" style="left:1439.29px;top:929.88px;font-size:22.5px;line-height:22.5px;color:#5C6370;font-weight:400;transform:scaleX(0.9493);-webkit-text-stroke:0.2px #5C6370;">Run Export Excel</div>
<div class="a" style="left:1481.5px;top:865.5px;width:17px;height:17px;border-radius:50%;background:#4A5CF6;border:1.5px solid #FFFFFF"></div>
<div class="a" style="left:1481.5px;top:959.5px;width:17px;height:17px;border-radius:50%;background:#4A5CF6;border:1.5px solid #FFFFFF"></div>
<div class="a" style="left:1609px;top:842.5px;width:46px;height:46px;border-radius:50%;background:#D6E4FB;border:1.8px solid #FFFFFF"></div><svg style="left:1616px;top:849.5px" width="32" height="32" viewBox="0 0 32 32"><circle cx="16" cy="18" r="11.3" fill="none" stroke="#0808E0" stroke-width="2.6"/><path d="M12.5 3.5 H19.5 M16 4 V6.5 M4.5 8.5 L6.5 6.8 M27.5 8.5 L25.5 6.8 M16 12 V18 L19.5 21" fill="none" stroke="#0808E0" stroke-width="2.4" stroke-linecap="round"/></svg>
<div class="a" style="left:1628.4px;top:1166px;width:256.5px;height:101.5px;border-radius:26px;border:4px solid #3036F5;background:#F7F9FC"></div>
<div class="a" style="left:1636px;top:1174px;width:241px;height:86px;border-radius:19px;background:#E9F0FD"></div>
<div class="a" style="left:1609px;top:1194px;width:46px;height:46px;border-radius:50%;background:#FDDCDD;border:1.8px solid #FFFFFF"></div><svg style="left:1616px;top:1201px" width="32" height="32" viewBox="0 0 32 32"><circle cx="16" cy="16" r="12.6" fill="none" stroke="#EE0000" stroke-width="2.6"/><path d="M16 9.5 V16.5" stroke="#EE0000" stroke-width="2.6"/><circle cx="16" cy="21" r="1.5" fill="#EE0000"/></svg>
<div class="a" style="left:1652.8px;top:1189.5px;width:55px;height:55px;border-radius:50%;background:#FFFFFF;border:1.8px solid #C3CBD6"></div>
<svg style="left:1662px;top:1202px" width="36" height="30" viewBox="0 0 36 30"><rect x="3.5" y="3.5" width="29" height="23.5" rx="4.5" fill="none" stroke="#2F3BE8" stroke-width="3"/><path d="M4.5 6 L18 15.5 L31.5 6" fill="none" stroke="#2F3BE8" stroke-width="3" stroke-linejoin="round"/></svg>
<div class="t" style="left:1723.52px;top:1189.50px;font-size:26px;line-height:26px;color:#0A0A0A;font-weight:700;transform:scaleX(0.9644);-webkit-text-stroke:0px #0A0A0A;">send email</div>
<div class="t" style="left:1723.44px;top:1225.45px;font-size:23px;line-height:23px;color:#5C6370;font-weight:400;transform:scaleX(0.9252);-webkit-text-stroke:0.2px #5C6370;">Send Email</div>
<div class="a" style="left:1747.5px;top:1161.0px;width:17px;height:17px;border-radius:50%;background:#4A5CF6;border:1.5px solid #FFFFFF"></div>
<div class="a" style="left:1747.5px;top:1255.5px;width:17px;height:17px;border-radius:50%;background:#4A5CF6;border:1.5px solid #FFFFFF"></div>
<div class="a" style="left:1858px;top:1138.6px;width:46px;height:46px;border-radius:50%;background:#D6E4FB;border:1.8px solid #FFFFFF"></div><svg style="left:1865px;top:1145.6px" width="32" height="32" viewBox="0 0 32 32"><circle cx="16" cy="18" r="11.3" fill="none" stroke="#0808E0" stroke-width="2.6"/><path d="M12.5 3.5 H19.5 M16 4 V6.5 M4.5 8.5 L6.5 6.8 M27.5 8.5 L25.5 6.8 M16 12 V18 L19.5 21" fill="none" stroke="#0808E0" stroke-width="2.4" stroke-linecap="round"/></svg>
<div class="a" style="left:2274px;top:304px;width:576px;height:1136px;border-radius:8px;border:2px solid #DDE1EA;background:#FDFDFE;overflow:hidden"><div class="a" style="left:0;top:1043px;width:576px;height:92px;background:#F5F7FB;border-top:2px solid #DEDFE4"></div></div>
<div class="t" style="left:2315.03px;top:343.43px;font-size:29.5px;line-height:29.5px;color:#0A0A0A;font-weight:400;transform:scaleX(0.9212);-webkit-text-stroke:0.5px #0A0A0A;">Properties</div>
<div class="a" style="left:2284px;top:402px;width:556px;height:1.8px;background:#DDE0E8"></div>
<div class="t" style="left:2398.45px;top:857.65px;font-size:29px;line-height:29px;color:#8E949E;font-weight:400;transform:scaleX(0.9270);-webkit-text-stroke:0.4px #8E949E;">No node has been selected</div>
<div class="t" style="left:2298.87px;top:1382.24px;font-size:25.6px;line-height:25.6px;color:#2F3BD8;font-weight:400;transform:scaleX(0.9401);-webkit-text-stroke:0.3px #2F3BD8;">Download PNG</div>
<div class="a" style="left:2631.4px;top:1379.4px;width:31.2px;height:31px;border-radius:5px;border:2px solid #686868;background:#FFFFFF"></div>
<div class="t" style="left:2677.49px;top:1382.24px;font-size:25.6px;line-height:25.6px;color:#0A0A0A;font-weight:400;transform:scaleX(1.0311);-webkit-text-stroke:0.3px #0A0A0A;">Enable Debug</div>
<div class="a" style="left:2274px;top:1526px;width:576px;height:243px;border-radius:8px;border:2px solid #DDE1EA;background:#F3F3F3"></div>
<div class="a" style="left:2358.6px;top:1537.2px;width:407px;height:221.3px;background:#FDFDFD"></div>
<div class="a" style="left:2514.3px;top:1566px;width:43.69999999999982px;height:25.59999999999991px;border-radius:2px;background:#B3CEFB"></div>
<div class="a" style="left:2564.2px;top:1624.2px;width:40.70000000000027px;height:13.5px;border-radius:2px;background:#B3CEFB"></div>
<div class="a" style="left:2602px;top:1667.1px;width:36px;height:13.600000000000136px;border-radius:2px;background:#B3CEFB"></div>
<div class="a" style="left:106px;top:1562px;width:52px;height:208px;background:#FDFDFD;box-shadow:0 0 5px rgba(0,0,0,0.12)"></div>
<div class="a" style="left:106px;top:1612px;width:52px;height:2px;background:#E9E9EB"></div>
<div class="a" style="left:106px;top:1664px;width:52px;height:2px;background:#E9E9EB"></div>
<div class="a" style="left:106px;top:1716px;width:52px;height:2px;background:#E9E9EB"></div>
<svg style="left:120px;top:1575px" width="24" height="24" viewBox="0 0 24 24"><path d="M12 0 V24 M0 12 H24" stroke="#000" stroke-width="3.4"/></svg>
<svg style="left:120px;top:1636.5px" width="24" height="4" viewBox="0 0 24 4"><path d="M0 2 H24" stroke="#000" stroke-width="3.4"/></svg>
<svg style="left:120px;top:1680px" width="24" height="22" viewBox="0 0 24 22"><path d="M1.5 7 V3 Q1.5 1.5 3 1.5 H7 M17 1.5 H21 Q22.5 1.5 22.5 3 V7 M22.5 15 V19 Q22.5 20.5 21 20.5 H17 M7 20.5 H3 Q1.5 20.5 1.5 19 V15" fill="none" stroke="#000" stroke-width="3"/></svg>
<svg style="left:121px;top:1731px" width="24" height="27" viewBox="0 0 24 27"><path d="M12 9 V6 Q12 2 15.5 2 Q19 2 19 6 V8" fill="none" stroke="#000" stroke-width="2.6"/><rect x="1.5" y="8.5" width="19" height="16.5" rx="2.5" fill="#000"/><circle cx="11" cy="16.5" r="2.2" fill="#fff"/></svg>
<svg style="left:581px;top:1231px;transform-origin:0 0;transform:scale(1.06,1.03)" width="36" height="36" viewBox="0 0 36 36"><path d="M10.5 26 C8 23 4 19 1.5 16 C0.5 14 2.5 12.5 4.5 13.5 L10.5 18.5 L7 7 C6.3 4.5 9.5 3.5 10.5 6 L14 15 L13.8 4.5 C13.8 1.5 17.5 1.5 17.7 4.5 L18.5 15 L21 5.5 C21.8 3 25 3.8 24.5 6.5 L22.5 16.5 L27 9.5 C28.5 7.5 31 8.5 30 11.5 L26.5 22 C25.5 25 24.5 27 24 31 H18 L17 29.5 L16 31 H10.5 Z" fill="#fff" stroke="#000" stroke-width="2" stroke-linejoin="round"/><path d="M14 19 V26 M17.5 19 V26 M21 19 V26" stroke="#000" stroke-width="1.6"/></svg>
</body></html>
